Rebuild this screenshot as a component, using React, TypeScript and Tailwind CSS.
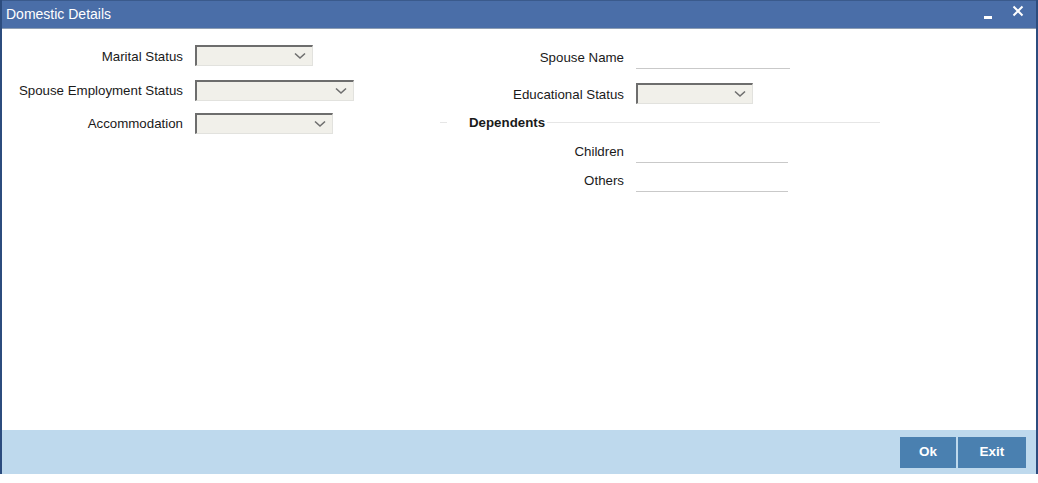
import React from "react";

const font = { fontFamily: '"Liberation Sans", Arial, sans-serif' };

function Chevron() {
  return (
    <svg width="12" height="8" viewBox="0 0 12 8" className="shrink-0">
      <path d="M1 1.5 L6 6 L11 1.5" fill="none" stroke="#6f6f6f" strokeWidth="1.6" />
    </svg>
  );
}

function Select({ w }: { w: string }) {
  return (
    <div
      className={`${w} h-[21px] flex items-center justify-end pr-[6px] bg-[#f1f0ea] border-t-2 border-l-2 border-t-[#6d6d6d] border-l-[#6d6d6d] border-b border-r border-b-[#e2e2de] border-r-[#e2e2de]`}
    >
      <Chevron />
    </div>
  );
}

function Line({ w }: { w: string }) {
  return <div className={`${w} h-[21px] border-b border-[#c9c9c9]`} />;
}

export default function App() {
  return (
    <div style={font} className="w-[1038px] h-[483px] bg-white text-[13.3px] text-[#1a1a1a]">
      <div className="h-[474px] flex flex-col border-x-2 border-[#2c4c7e]">
        {/* header */}
        <div className="h-[29px] bg-[#4a6ea8] border-t border-[#3a5a8c] border-b border-b-[#8c9db3] flex items-center justify-between pl-[4px] pr-[12px]">
          <span className="text-white text-[14px]">Domestic Details</span>
          <div className="flex items-center gap-[20px]">
            <div className="w-[8px] h-[3px] bg-white mt-[5px]" />
            <svg width="12" height="12" viewBox="0 0 12 12" className="mb-[7px]">
              <path d="M1.5 1.5 L10.5 10.5 M10.5 1.5 L1.5 10.5" stroke="white" strokeWidth="2" />
            </svg>
          </div>
        </div>

        {/* body */}
        <div className="flex-1 flex">
          {/* left column */}
          <div className="w-[438px] pt-[16px] flex flex-col gap-[12px]">
            <div className="flex items-center gap-[12px]">
              <div className="w-[181px] text-right mt-[2px]">Marital Status</div>
              <Select w="w-[118px]" />
            </div>
            <div className="flex items-center gap-[12px] mt-[1px]">
              <div className="w-[181px] text-right mt-[1px]">Spouse Employment Status</div>
              <Select w="w-[159px]" />
            </div>
            <div className="flex items-center gap-[12px]">
              <div className="w-[181px] text-right mt-[1px]">Accommodation</div>
              <Select w="w-[138px]" />
            </div>
          </div>

          {/* right column */}
          <div className="w-[440px] pt-[19px] flex flex-col">
            <div className="flex items-center gap-[12px]">
              <div className="w-[184px] text-right mb-[1px]">Spouse Name</div>
              <Line w="w-[154px]" />
            </div>
            <div className="flex items-center gap-[12px] mt-[13px]">
              <div className="w-[184px] text-right mt-[3px]">Educational Status</div>
              <Select w="w-[117px]" />
            </div>
            <div className="flex items-center mt-[10px] h-[16px]">
              <div className="w-[7px] h-px bg-[#e6e6e6]" />
              <div className="px-[22px] pr-[2px] font-bold">Dependents</div>
              <div className="flex-1 h-px bg-[#e6e6e6]" />
            </div>
            <div className="flex items-center gap-[12px] mt-[11px]">
              <div className="w-[184px] text-right mb-[2px]">Children</div>
              <Line w="w-[152px]" />
            </div>
            <div className="flex items-center gap-[12px] mt-[7px]">
              <div className="w-[184px] text-right mb-[2px]">Others</div>
              <Line w="w-[152px]" />
            </div>
          </div>
        </div>

        {/* footer */}
        <div className="h-[44px] bg-[#bed9ed] flex items-center justify-end pr-[10px] gap-[2px]">
          <button className="w-[56px] h-[31px] bg-[#4a80b0] text-white font-bold text-[13.5px]">Ok</button>
          <button className="w-[68px] h-[31px] bg-[#4a80b0] text-white font-bold text-[13.5px]">Exit</button>
        </div>
      </div>
    </div>
  );
}
